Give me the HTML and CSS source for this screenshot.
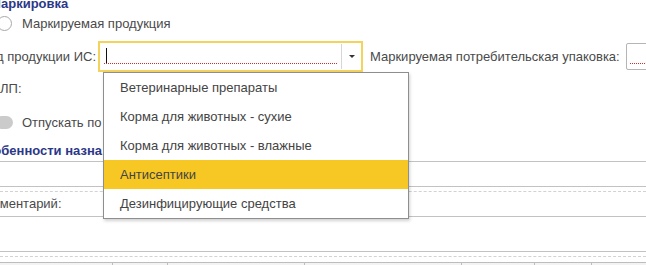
FILE: index.html
```html
<!DOCTYPE html>
<html lang="ru">
<head>
  <meta charset="UTF-8">
  <title>Маркировка</title>
  <link rel="stylesheet" href="styles.css">
</head>
<body>

  <div class="form">
    <div class="group-title title-mark">Маркировка</div>

    <label class="radio-row">
      <span class="radio"></span>
      Маркируемая продукция
    </label>

    <div class="field-row">
      <span class="label label-kind">Вид продукции ИС:</span>
      <div class="combo">
        <div class="combo-input">
          <span class="caret"></span>
          <span class="red-line"></span>
        </div>
        <div class="combo-btn"><span class="arrow"></span></div>
      </div>
      <span class="label label-pack">Маркируемая потребительская упаковка:</span>
      <div class="small-input"><span class="red-line"></span></div>
    </div>

    <div class="plain-row">
      <span class="label">ЛП:</span>
    </div>

    <div class="toggle-row">
      <span class="toggle"></span>
      Отпускать по
    </div>

    <div class="group-title title-spec">Особенности назна</div>

    <div class="rule"></div>
    <div class="blank-row"></div>
    <div class="rule"></div>
    <div class="rule dashed"></div>
    <div class="comment-row">
      <span class="label label-comment">Комментарий:</span>
    </div>
    <div class="rule"></div>
    <div class="blank-row tall"></div>
    <div class="rule"></div>
    <div class="rule dashed"></div>

    <div class="table-head">
      <div class="th"></div>
      <div class="th"></div>
      <div class="th"></div>
      <div class="th"></div>
      <div class="th"></div>
      <div class="th"></div>
      <div class="th"></div>
    </div>
  </div>

  <ul class="dropdown">
    <li>Ветеринарные препараты</li>
    <li>Корма для животных - сухие</li>
    <li>Корма для животных - влажные</li>
    <li class="active">Антисептики</li>
    <li>Дезинфицирующие средства</li>
  </ul>

</body>
</html>
```

FILE: styles.css
```css
* {
  margin: 0; padding: 0; box-sizing: border-box;
}

html, body {
  width: 646px;
  height: 265px;
  overflow: hidden;
}

body {
  font-family: 'Liberation Sans', Arial, sans-serif;
  font-size: 13px;
  color: #4a4a4a;
  background: #fff;
  position: relative;
}

.form {
  margin-top: -4px;
}

.group-title {
  height: 15px;
  line-height: 15px;
  font-weight: bold;
  color: #2b3788;
  white-space: nowrap;
}

.title-mark {
  margin-left: -10px;
}

.title-spec {
  margin-top: 11px;
  height: 16px;
  line-height: 16px;
  margin-left: -24px;
}

.radio-row {
  display: flex;
  align-items: center;
  gap: 10px;
  height: 20px;
  margin-top: 2px;
  white-space: nowrap;
}

.radio {
  width: 15px;
  height: 15px;
  margin-left: -3px;
  border: 1px solid #a9a9a9;
  border-radius: 50%;
  background: #fff;
  flex-shrink: 0;
}

.field-row {
  display: flex;
  align-items: center;
  height: 31px;
  margin-top: 8px;
  white-space: nowrap;
}

.field-row > * {
  flex-shrink: 0;
}

.label-kind {
  width: 115px;
  margin-left: -20px;
  text-align: right;
}

.combo {
  display: flex;
  width: 265px;
  height: 31px;
  margin-left: 3px;
  border: 2px solid #f3d35c;
  background: #fff;
}

.combo-input {
  flex: 1;
  position: relative;
}

.red-line {
  position: absolute;
  left: 4px;
  right: 3px;
  top: 20px;
  height: 1px;
  background: repeating-linear-gradient(to right, #d42b2b 0 1px, transparent 1px 2px);
}

.caret {
  position: absolute;
  left: 6px;
  top: 5px;
  width: 1px;
  height: 16px;
  background: #111;
}

.combo-btn {
  width: 20px;
  margin: 1px 0;
  border-left: 1px solid #d6d6d6;
  display: flex;
  align-items: center;
  justify-content: center;
}

.arrow {
  width: 0;
  height: 0;
  border-left: 3px solid transparent;
  border-right: 3px solid transparent;
  border-top: 3px solid #333;
}

.label-pack {
  margin-left: 7px;
}

.small-input {
  width: 40px;
  height: 27px;
  margin-left: 6px;
  border: 1px solid #b5b5b5;
  border-radius: 2px;
  position: relative;
}

.small-input .red-line {
  left: 3px;
  right: 0;
  top: 19px;
}

.plain-row {
  height: 20px;
  line-height: 20px;
  margin-top: 7px;
}

.toggle-row {
  display: flex;
  align-items: center;
  gap: 9px;
  height: 20px;
  margin-top: 13px;
  white-space: nowrap;
}

.toggle {
  width: 18px;
  height: 13px;
  margin-left: -5px;
  border-radius: 7px;
  background: #cbcbcb;
  flex-shrink: 0;
}

.rule {
  border-top: 1px solid #c2c2c2;
  margin-top: 2px;
}

.rule.dashed {
  border-top: 1px dashed #d2d2d2;
  margin-top: 4px;
}

.blank-row {
  height: 24px;
}

.blank-row + .rule {
  margin-top: 0;
}

.blank-row.tall {
  height: 34px;
}

.comment-row {
  height: 24px;
  line-height: 24px;
  white-space: nowrap;
}

.comment-row + .rule {
  margin-top: 0;
}

.label-comment {
  margin-left: -24px;
}

.table-head {
  display: grid;
  grid-template-columns: 112px 55px 137px 157px 73px 57px 1fr;
  margin-top: 5px;
  height: 8px;
  border-top: 1px solid #bdbdbd;
  background: #f3f3f3;
}

.th + .th {
  border-left: 1px solid #bdbdbd;
}

.dropdown {
  position: absolute;
  left: 103px;
  top: 72px;
  width: 306px;
  list-style: none;
  background: #fff;
  border: 1px solid #8e8e8e;
  box-shadow: 1px 2px 3px rgba(0, 0, 0, 0.18);
}

.dropdown li {
  height: 29px;
  line-height: 29px;
  padding-left: 16px;
  color: #444;
  white-space: nowrap;
}

.dropdown li.active {
  background: #f7c823;
}
```
